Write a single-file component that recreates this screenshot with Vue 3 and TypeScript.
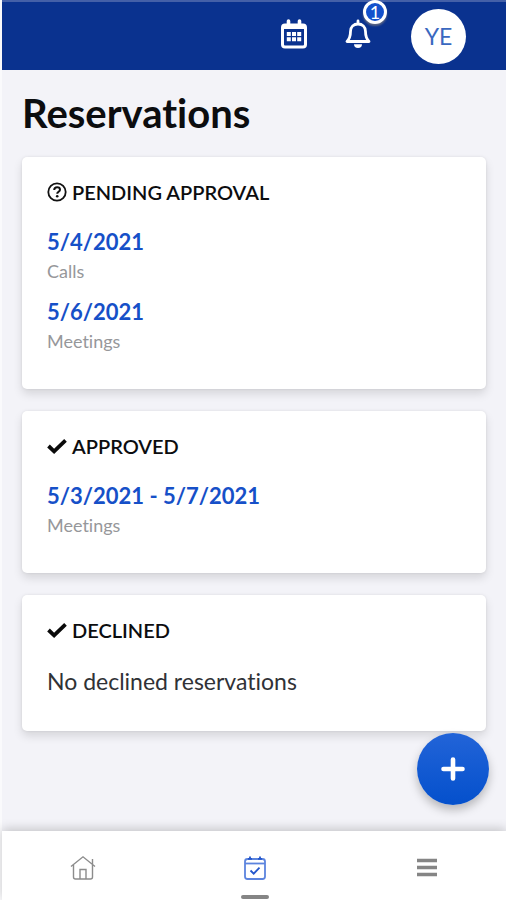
<script setup lang="ts">
interface Reservation {
  date: string
  kind: string
}

interface Section {
  title: string
  icon: 'question' | 'check'
  items: Reservation[]
  empty: string
}

const sections: Section[] = [
  {
    title: 'PENDING APPROVAL',
    icon: 'question',
    items: [
      { date: '5/4/2021', kind: 'Calls' },
      { date: '5/6/2021', kind: 'Meetings' },
    ],
    empty: 'No pending reservations',
  },
  {
    title: 'APPROVED',
    icon: 'check',
    items: [{ date: '5/3/2021 - 5/7/2021', kind: 'Meetings' }],
    empty: 'No approved reservations',
  },
  { title: 'DECLINED', icon: 'check', items: [], empty: 'No declined reservations' },
]
</script>

<template>
  <div class="app">
    <header class="topbar">
      <button class="icon-button" type="button" aria-label="Calendar">
        <svg width="26" height="30" viewBox="0 0 26 30" fill="none">
          <path d="M7.500 2v5M18.500 2v5" stroke="#fff" stroke-width="3.600" stroke-linecap="round" />
          <rect x="1.500" y="6" width="23" height="22" rx="2.500" stroke="#fff" stroke-width="3" />
          <path d="M2 7.500h22" stroke="#fff" stroke-width="5" />
          <path
            d="M5.800 15h4M11 15h4M16.200 15h4M5.800 20.300h4M11 20.300h4M16.200 20.300h4"
            stroke="#fff"
            stroke-width="4"
          />
        </svg>
      </button>
      <button class="icon-button bell" type="button" aria-label="Notifications">
        <svg width="26" height="30" viewBox="0 0 26 30" fill="none">
          <path
            d="M13 2v3M2 22.500h22c-2.300-2.500-3.500-4.500-3.500-10 0-4.500-3.200-7.500-7.500-7.500s-7.500 3-7.500 7.500c0 5.500-1.200 7.500-3.500 10z"
            stroke="#fff"
            stroke-width="2.800"
            stroke-linecap="round"
            stroke-linejoin="round"
          />
          <path d="M9 25.300h8a4 3.600 0 0 1-8 0z" fill="#fff" />
        </svg>
        <span class="badge">1</span>
      </button>
      <button class="avatar" type="button" aria-label="Account YE">YE</button>
    </header>

    <main class="content">
      <h1>Reservations</h1>
      <section v-for="section in sections" :key="section.title" class="card">
        <h2>
          <svg v-if="section.icon === 'question'" width="20" height="20" viewBox="0 0 20 20" fill="none">
            <circle cx="10" cy="10" r="8.700" stroke="#111" stroke-width="1.800" />
            <path
              d="M7.200 8c.1-1.800 1.300-2.700 2.900-2.700 1.700 0 2.900 1 2.900 2.400 0 2-2.800 2-2.800 4"
              stroke="#111"
              stroke-width="2"
            />
            <circle cx="10.200" cy="14.200" r="1.300" fill="#111" />
          </svg>
          <svg v-else width="20" height="20" viewBox="0 0 20 20" fill="none">
            <path d="M1.500 10l5.600 5.300L18.500 4.300" stroke="#0a0a0a" stroke-width="3.800" />
          </svg>
          <span>{{ section.title }}</span>
        </h2>
        <ul v-if="section.items.length">
          <li v-for="item in section.items" :key="item.date">
            <a href="#">{{ item.date }}</a>
            <span class="kind">{{ item.kind }}</span>
          </li>
        </ul>
        <p v-else>{{ section.empty }}</p>
      </section>
    </main>

    <button class="fab" type="button" aria-label="Add reservation">
      <svg width="24" height="24" viewBox="0 0 24 24">
        <path d="M12 2.500v19M2.500 12h19" stroke="#fff" stroke-width="4.600" stroke-linecap="round" />
      </svg>
    </button>

    <nav class="tabs" aria-label="Main">
      <a href="#" aria-label="Home">
        <svg width="26" height="26" viewBox="0 0 26 26" fill="none" stroke="#8c8c8c" stroke-width="1.400">
          <path d="M1 11.500L13 1.800 25 11.500M22.500 9.500V4" />
          <path d="M3.500 10v12q0 2 2 2h15q2 0 2-2V10" />
          <path d="M10 24v-9.500h6V24" />
        </svg>
      </a>
      <a href="#" class="active" aria-label="Reservations" aria-current="page">
        <svg width="24" height="26" viewBox="0 0 24 26" fill="none" stroke="#5c84de" stroke-width="1.800">
          <rect x="2" y="4" width="20" height="20" rx="2.500" />
          <path d="M2 8.500h20" />
          <path d="M7 1.500v3M17 1.500v3M5 3.800h4M15 3.800h4" stroke="#2457cc" stroke-width="1.800" />
          <path d="M7.500 15.500l3.200 3.200 5.800-6" stroke="#2457cc" stroke-width="1.800" />
        </svg>
      </a>
      <a href="#" aria-label="Menu">
        <svg width="22" height="22" viewBox="0 0 22 22">
          <path d="M1 3.500h20M1 10.500h20M1 17.500h20" stroke="#858585" stroke-width="3.400" />
        </svg>
      </a>
    </nav>
  </div>
</template>

<style>
body {
  margin: 0;
  background: #f3f3f8;
}
</style>

<style scoped>
.app {
  display: flex;
  flex-direction: column;
  min-height: 100vh;
  box-sizing: border-box;
  border-left: 2px solid #fafafc;
  background: #f3f3f8;
  color: #0c0d0f;
  font-family: Lato, "Open Sans", sans-serif;
  font-variant-ligatures: none;
}

button {
  padding: 0;
  border: 0;
  background: none;
  font-family: inherit;
  cursor: pointer;
}

svg {
  display: block;
  flex: none;
}

.topbar {
  display: flex;
  align-items: center;
  justify-content: flex-end;
  height: 70px;
  padding-right: 40px;
  box-sizing: border-box;
  border-top: 2px solid #4460a8;
  background: #0a328f;
}

.icon-button {
  position: relative;
  margin: 0 38px 4px 0;
}

.bell {
  margin-right: 40px;
}

.badge {
  position: absolute;
  top: -19px;
  right: -16px;
  width: 18px;
  height: 18px;
  border: 3px solid #fff;
  border-radius: 50%;
  background: #1350cc;
  box-shadow: 0 2px 2px #5c6684;
  color: #fff;
  font-size: 18px;
  line-height: 18px;
  text-align: center;
}

.avatar {
  width: 55px;
  height: 55px;
  border-radius: 50%;
  background: #fff;
  color: #3a68c0;
  font-size: 23px;
}

.content {
  display: flex;
  flex: 1;
  flex-direction: column;
  gap: 22px;
  padding: 22px 20px 90px;
}

h1 {
  margin: 0;
  font-size: 40px;
  font-weight: 700;
  line-height: 43px;
}

.card {
  padding: 23px 25px 34px;
  border-radius: 5px;
  background: #fff;
  box-shadow: 0 5px 10px rgba(0, 0, 0, 0.12), 0 0 3px rgba(0, 0, 0, 0.08);
}

h2 {
  display: flex;
  align-items: center;
  gap: 5px;
  margin: 0 0 23px;
  font-size: 20px;
  font-weight: 600;
  line-height: 24px;
}

ul {
  display: flex;
  flex-direction: column;
  gap: 12px;
  margin: 0;
  padding: 0;
  list-style: none;
}

li {
  display: flex;
  flex-direction: column;
  align-items: flex-start;
}

li a {
  color: #1650c8;
  font-size: 22px;
  font-weight: 700;
  line-height: 30px;
  text-decoration: none;
}

.kind {
  color: #96979a;
  font-size: 18px;
  line-height: 28px;
}

p {
  margin: 0;
  color: #303236;
  font-size: 23px;
  line-height: 32px;
}

.fab {
  position: fixed;
  right: 17px;
  bottom: 95px;
  display: grid;
  place-items: center;
  width: 72px;
  height: 72px;
  border-radius: 50%;
  background: linear-gradient(#2264d8, #0450cc);
  box-shadow: 0 5px 10px rgba(0, 0, 0, 0.25);
}

.tabs {
  position: sticky;
  bottom: 0;
  display: flex;
  justify-content: space-between;
  height: 69px;
  padding: 0 65px 0 67px;
  background: #fff;
  box-shadow: 0 -2px 10px rgba(0, 0, 0, 0.2);
}

.tabs a {
  position: relative;
  display: grid;
  place-items: center;
  width: 28px;
  padding-top: 4px;
}

.active::after {
  content: "";
  position: absolute;
  bottom: 1px;
  left: 0;
  width: 28px;
  height: 4px;
  border-radius: 2px;
  background: #858585;
}
</style>
